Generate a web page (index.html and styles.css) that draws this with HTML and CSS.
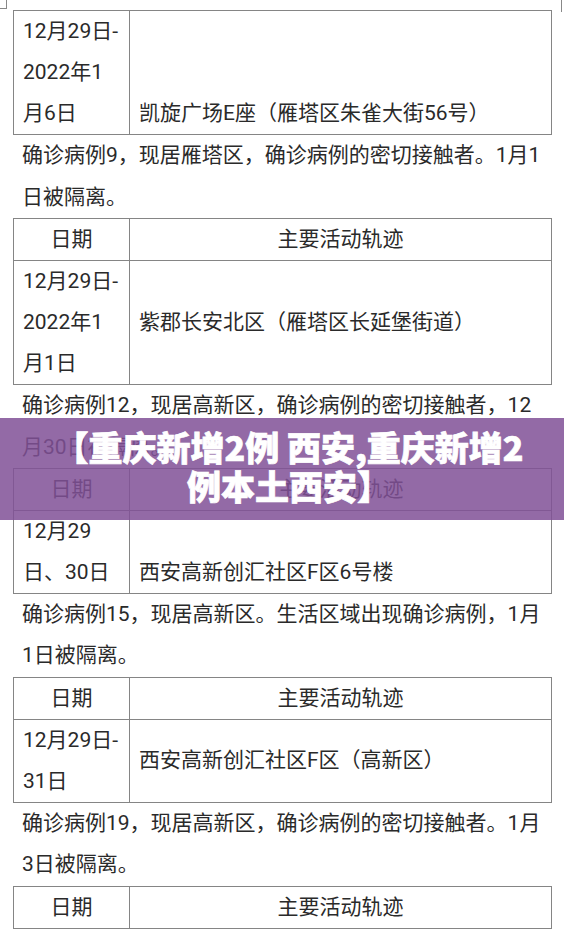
FILE: index.html
```html
<!DOCTYPE html>
<html lang="zh-CN">
<head>
<meta charset="utf-8">
<title>重庆新增2例 西安</title>
<link rel="stylesheet" href="styles.css">
</head>
<body>
<div class="page">
  <div class="prev"><span class="prev-l"></span><span class="prev-r"></span></div>
  <div class="doc">
    <table class="trk">
      <colgroup><col class="c-date"><col></colgroup>
      <tr>
        <td>12月29日-<br>2022年1<br>月6日</td>
        <td class="v-bottom">凯旋广场E座（雁塔区朱雀大街56号）</td>
      </tr>
    </table>
    <p class="note">确诊病例9，现居雁塔区，确诊病例的密切接触者。1月1<br>日被隔离。</p>

    <table class="trk">
      <colgroup><col class="c-date"><col></colgroup>
      <tr class="head"><td>日期</td><td>主要活动轨迹</td></tr>
      <tr>
        <td>12月29日-<br>2022年1<br>月1日</td>
        <td class="v-middle">紫郡长安北区（雁塔区长延堡街道）</td>
      </tr>
    </table>
    <p class="note">确诊病例12，现居高新区，确诊病例的密切接触者，12<br>月30日被隔离。</p>

    <table class="trk">
      <colgroup><col class="c-date"><col></colgroup>
      <tr class="head"><td>日期</td><td>主要活动轨迹</td></tr>
      <tr>
        <td>12月29<br>日、30日</td>
        <td class="v-bottom">西安高新创汇社区F区6号楼</td>
      </tr>
    </table>
    <p class="note">确诊病例15，现居高新区。生活区域出现确诊病例，1月<br>1日被隔离。</p>

    <table class="trk">
      <colgroup><col class="c-date"><col></colgroup>
      <tr class="head"><td>日期</td><td>主要活动轨迹</td></tr>
      <tr>
        <td>12月29日-<br>31日</td>
        <td class="v-middle">西安高新创汇社区F区（高新区）</td>
      </tr>
    </table>
    <p class="note">确诊病例19，现居高新区，确诊病例的密切接触者。1月<br>3日被隔离。</p>

    <table class="trk">
      <colgroup><col class="c-date"><col></colgroup>
      <tr class="head"><td>日期</td><td>主要活动轨迹</td></tr>
    </table>
  </div>
  <div class="banner">
    <h1 class="banner-title">【重庆新增2例 西安,重庆新增2<br>例本土西安】</h1>
  </div>
</div>
</body>
</html>
```
FILE: styles.css
```css
html, body {
  margin: 0;
  padding: 0;
  background: #ffffff;
}

.page {
  position: relative;
  width: 564px;
  height: 939px;
  overflow: hidden;
  background: #ffffff;
  font-family: Roboto, "Noto Sans CJK SC", sans-serif;
  color: #2a2a2a;
  font-size: 21px;
}

.prev {
  display: flex;
  justify-content: space-between;
  align-items: flex-start;
  height: 10px;
}

.prev-l {
  display: block;
  width: 7px;
  height: 9px;
  border-right: 1px solid #888;
  border-bottom: 1px solid #888;
  box-sizing: border-box;
}

.prev-r {
  display: block;
  width: 3px;
  height: 12px;
  border-left: 1px solid #888;
  box-sizing: border-box;
}

.doc {
  padding-left: 13px;
}

.trk {
  width: 539px;
  table-layout: fixed;
  border-collapse: collapse;
}

.c-date {
  width: 116px;
}

.trk td {
  border: 1px solid #858585;
  padding: 0 9px 0 9px;
  line-height: 41.1px;
  vertical-align: top;
  white-space: nowrap;
}

.trk .head td {
  text-align: center;
  vertical-align: middle;
}

.trk td.v-bottom {
  vertical-align: bottom;
}

.trk td.v-middle {
  vertical-align: middle;
}

.note {
  margin: 0;
  padding-left: 9px;
  line-height: 41.3px;
  white-space: nowrap;
}

.banner {
  position: absolute;
  left: 0;
  top: 418px;
  width: 564px;
  height: 102px;
  background: rgba(128, 80, 150, 0.85);
  display: flex;
  align-items: center;
  justify-content: center;
  padding: 0 0 6px 14px;
  box-sizing: border-box;
}

.banner-title {
  margin: 0;
  color: #ffffff;
  font-family: "Noto Sans CJK SC", sans-serif;
  font-weight: 900;
  font-size: 34px;
  line-height: 39px;
  text-align: center;
  white-space: nowrap;
  -webkit-text-stroke: 0.7px #ffffff;
}
```
